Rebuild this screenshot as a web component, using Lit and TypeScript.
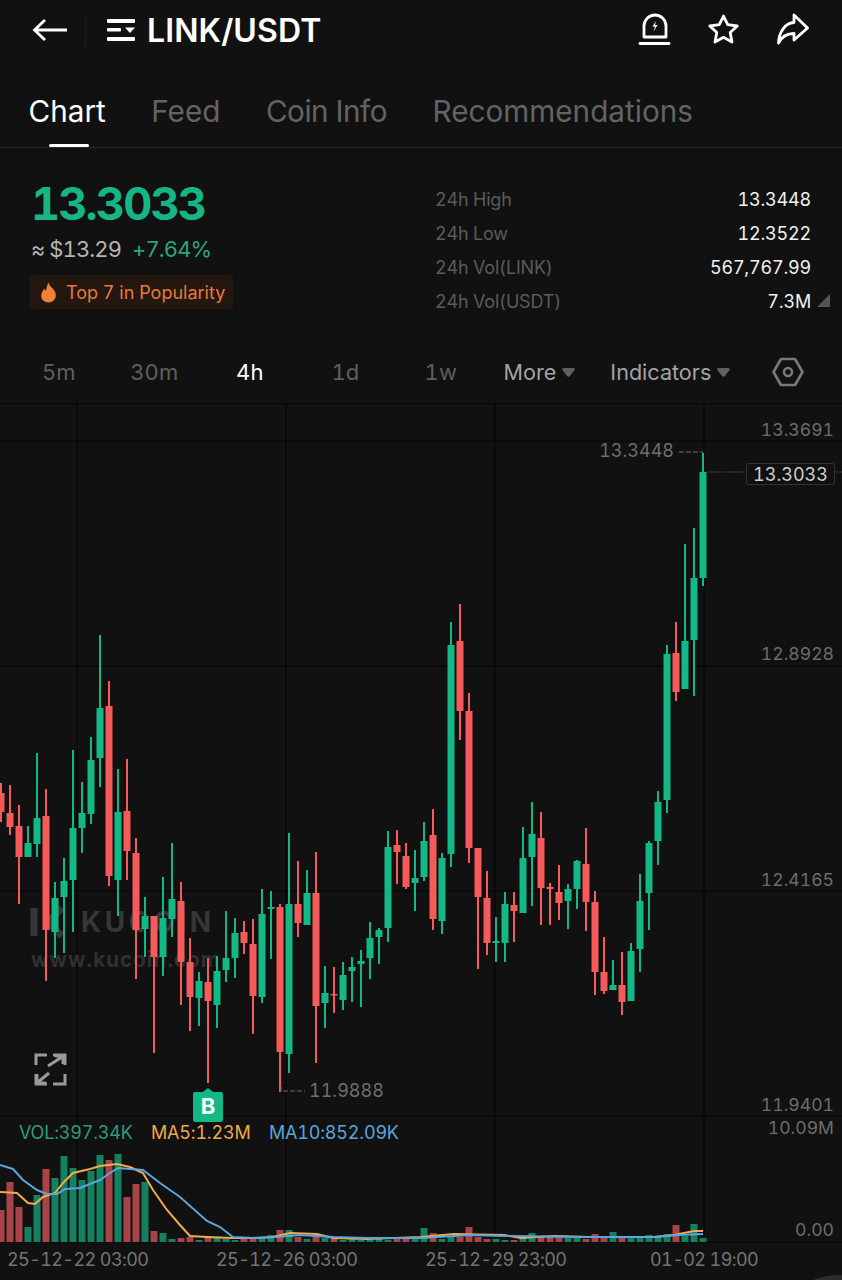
import { LitElement, html, svg, css } from 'lit';
import { customElement } from 'lit/decorators.js';

const UP = '#12b886';
const DOWN = '#f65a5a';
const UP_DIM = '#14805f';
const DOWN_DIM = '#a84447';

// [x, up?, wick top, body top, body bottom, wick bottom]
type Candle = [number, boolean, number, number, number, number];

const CANDLES: Candle[] = [
  [1, false, 783, 793, 812, 822],
  [10, false, 785, 813, 827, 835],
  [19, false, 805, 826, 857, 904],
  [28, true, 826, 843, 857, 857],
  [37, true, 753, 818, 844, 857],
  [46, false, 789, 816, 930, 981],
  [55, true, 882, 898, 932, 958],
  [64, true, 858, 881, 897, 953],
  [73, true, 750, 828, 880, 932],
  [82, true, 782, 813, 828, 853],
  [91, true, 737, 760, 814, 824],
  [100, true, 635, 708, 758, 787],
  [109, false, 681, 706, 876, 886],
  [118, true, 769, 812, 880, 916],
  [127, false, 759, 811, 851, 880],
  [136, false, 838, 853, 930, 979],
  [145, true, 897, 916, 929, 957],
  [154, false, 916, 916, 957, 1053],
  [163, true, 877, 918, 957, 976],
  [172, true, 843, 899, 919, 937],
  [181, false, 882, 901, 962, 1005],
  [190, false, 938, 962, 997, 1031],
  [199, true, 972, 981, 998, 1026],
  [208, false, 958, 982, 1001, 1083],
  [217, true, 956, 971, 1005, 1028],
  [226, true, 911, 958, 970, 982],
  [235, true, 918, 933, 958, 978],
  [244, false, 921, 932, 943, 954],
  [253, false, 919, 944, 996, 1034],
  [262, true, 889, 914, 997, 1003],
  [271, true, 891, 907, 909, 959],
  [280, false, 904, 907, 1052, 1092],
  [289, true, 833, 904, 1054, 1073],
  [298, false, 861, 904, 923, 937],
  [307, true, 870, 893, 925, 925],
  [316, false, 852, 893, 1006, 1063],
  [325, true, 966, 993, 1003, 1028],
  [334, false, 967, 994, 995, 1013],
  [343, true, 962, 975, 1000, 1010],
  [352, true, 957, 967, 971, 1002],
  [361, true, 950, 961, 964, 1007],
  [370, true, 922, 938, 958, 979],
  [379, true, 928, 930, 937, 964],
  [388, true, 831, 847, 928, 942],
  [397, false, 830, 845, 852, 884],
  [406, false, 843, 856, 887, 889],
  [415, true, 850, 878, 883, 911],
  [424, true, 822, 841, 877, 881],
  [433, false, 809, 835, 919, 930],
  [442, true, 853, 858, 921, 934],
  [451, true, 622, 645, 854, 867],
  [460, false, 604, 641, 711, 740],
  [469, false, 693, 711, 848, 863],
  [478, false, 848, 848, 897, 969],
  [487, false, 871, 898, 943, 955],
  [496, true, 917, 941, 943, 962],
  [505, true, 892, 904, 943, 962],
  [514, false, 892, 905, 911, 942],
  [523, true, 827, 858, 913, 913],
  [532, true, 802, 834, 857, 906],
  [541, false, 812, 838, 888, 925],
  [550, false, 883, 887, 889, 925],
  [559, false, 865, 892, 903, 920],
  [568, true, 884, 889, 901, 929],
  [577, true, 860, 861, 889, 909],
  [586, false, 828, 864, 902, 931],
  [595, false, 891, 902, 972, 995],
  [604, false, 937, 972, 991, 994],
  [613, true, 960, 985, 990, 990],
  [622, false, 952, 985, 1002, 1015],
  [631, true, 943, 951, 1001, 1001],
  [640, true, 874, 901, 949, 972],
  [649, true, 841, 843, 893, 930],
  [658, true, 791, 802, 841, 865],
  [667, true, 645, 654, 800, 813],
  [676, false, 622, 653, 692, 701],
  [685, true, 544, 641, 689, 689],
  [694, true, 528, 578, 640, 696],
  [703, true, 453, 472, 578, 586],
];

// volume bar tops, one per candle, in the same order
const VOLUME_TOPS = [
  1210, 1182, 1207, 1227, 1195, 1169, 1178, 1156, 1168, 1180, 1171, 1155, 1160, 1154, 1197, 1184,
  1182, 1231, 1233, 1239, 1238, 1237, 1240, 1237, 1238, 1239, 1240, 1239, 1239, 1238, 1235, 1230,
  1230, 1237, 1239, 1235, 1238, 1239, 1240, 1239, 1240, 1240, 1239, 1240, 1239, 1239, 1238, 1228,
  1233, 1239, 1237, 1237, 1227, 1237, 1239, 1239, 1240, 1240, 1238, 1233, 1237, 1237, 1237, 1238,
  1238, 1239, 1234, 1237, 1232, 1238, 1238, 1237, 1235, 1237, 1234, 1225, 1236, 1224, 1238,
];

const MA5 =
  '0,1192 17,1193 28,1203 35,1204 43,1197 55,1193 63,1183 73,1173 90,1169 100,1166 117,1164 130,1167 143,1173 153,1190 167,1210 180,1225 190,1236 207,1237 233,1238 253,1238 273,1237 290,1233 317,1234 333,1238 367,1239 421,1237 454,1234 504,1235 521,1238 554,1236 588,1237 654,1237 674,1235 694,1231 703,1231';
const MA10 =
  '0,1165 13,1169 23,1180 37,1190 47,1194 57,1194 65,1189 80,1188 100,1180 110,1173 118,1168 143,1170 160,1183 180,1197 207,1221 220,1227 233,1237 253,1238 277,1237 300,1235 333,1237 367,1238 421,1238 471,1235 504,1236 588,1237 654,1237 678,1235 703,1234';

const GRID_X = [77, 286, 495, 704];
const GRID_Y = [441, 666, 891, 1116, 1242];

const AXIS_LABELS: [string, number][] = [
  ['13.3691', 436],
  ['12.8928', 660],
  ['12.4165', 886],
  ['11.9401', 1111],
  ['10.09M', 1134],
  ['0.00', 1236],
];

const DATE_LABELS: [string, number][] = [
  ['25-12-22 03:00', 7],
  ['25-12-26 03:00', 216],
  ['25-12-29 23:00', 425],
  ['01-02 19:00', 650],
];

const STATS: [string, string][] = [
  ['24h High', '13.3448'],
  ['24h Low', '12.3522'],
  ['24h Vol(LINK)', '567,767.99'],
  ['24h Vol(USDT)', '7.3M'],
];

@customElement('app-root')
export class AppRoot extends LitElement {
  static override styles = css`
    :host {
      display: block;
      width: 842px;
      height: 1280px;
      overflow: hidden;
      background: #111111;
      color: #fff;
      font-family: Inter, 'Liberation Sans', sans-serif;
      font-variant-numeric: tabular-nums;
    }

    .header {
      display: flex;
      align-items: center;
      height: 60px;
      padding: 0 32px;
    }
    .back {
      width: 36px;
      height: 24px;
    }
    .divider {
      width: 1px;
      height: 34px;
      margin: 0 20px 0 17px;
      background: #1c1c1c;
    }
    .menu {
      width: 30px;
      height: 26px;
      margin-right: 11px;
    }
    .pair {
      font-size: 32px;
      font-weight: 600;
      letter-spacing: 0.1px;
      flex: 1;
    }
    .actions {
      display: flex;
      gap: 36px;
      margin-right: 1px;
    }
    .actions svg {
      width: 33px;
      height: 34px;
      fill: none;
      stroke: #fff;
      stroke-width: 2.8;
      stroke-linejoin: round;
      stroke-linecap: round;
    }
    .actions .bolt {
      fill: #fff;
      stroke: none;
    }

    .tabs {
      display: flex;
      gap: 45.5px;
      height: 88px;
      padding: 0 28.5px;
      box-sizing: border-box;
      border-bottom: 1px solid #2a2a2a;
    }
    .tab {
      position: relative;
      height: 87px;
      line-height: 102px;
      font-size: 29.7px;
      font-weight: 400;
      color: #636363;
    }
    .tab.tight {
      letter-spacing: -0.5px;
    }
    .tab.active {
      color: #fff;
    }
    .tab.active::after {
      content: '';
      position: absolute;
      left: 20px;
      width: 40px;
      bottom: 0;
      height: 3px;
      border-radius: 2px;
      background: #fff;
    }

    .summary {
      display: flex;
      justify-content: space-between;
      height: 191px;
      padding: 33px 12px 0 30px;
      box-sizing: border-box;
    }
    .price {
      margin-left: 1px;
      font-size: 45px;
      line-height: 46px;
      font-weight: 700;
      letter-spacing: -1.8px;
      color: #17b486;
    }
    .sub {
      display: flex;
      gap: 11px;
      margin: 8px 0 0 1px;
      font-size: 22px;
      line-height: 28px;
      letter-spacing: -0.9px;
      color: #b4b4b4;
    }
    .change {
      color: #2ba57f;
    }
    .pill {
      display: inline-flex;
      align-items: center;
      gap: 9px;
      height: 34px;
      margin-top: 12px;
      padding: 0 8px 0 10px;
      border-radius: 3px;
      background: #24170f;
      color: #e57a40;
      font-size: 18px;
    }
    .pill svg {
      width: 17px;
      height: 21px;
    }

    .stats {
      display: grid;
      grid-template-columns: 1fr auto;
      width: 395px;
      padding-top: 1px;
      grid-auto-rows: 34px;
      align-items: center;
      padding-right: 19px;
      box-sizing: border-box;
    }
    .label {
      font-size: 18px;
      letter-spacing: -0.2px;
      color: #5b5b5b;
    }
    .value {
      position: relative;
      font-size: 18px;
      letter-spacing: -0.2px;
      text-align: right;
      color: #f2f2f2;
    }
    .corner {
      position: absolute;
      left: 100%;
      bottom: 5px;
      margin-left: 6px;
      width: 13px;
      height: 13px;
      fill: #555;
    }

    .periods {
      display: flex;
      align-items: center;
      height: 64px;
      padding-top: 2px;
      box-sizing: border-box;
      font-size: 22px;
      color: #5f5f5f;
    }
    .period {
      width: 95.5px;
      text-align: center;
    }
    .period.first {
      margin-left: 11px;
    }
    .period.active {
      color: #fff;
    }
    .drop {
      display: flex;
      align-items: center;
      gap: 6px;
      font-size: 21.6px;
      color: #a3a3a3;
    }
    .drop svg {
      width: 13px;
      height: 9px;
      fill: #5f5f5f;
    }
    .drop.more {
      margin-left: 15px;
      margin-right: 35px;
    }
    .hex {
      width: 32px;
      height: 32px;
      margin-left: 42px;
      fill: none;
      stroke: #7a7a7a;
      stroke-width: 2.6;
      stroke-linejoin: round;
    }

    .chart {
      display: block;
      width: 842px;
      height: 877px;
    }
    .grid {
      stroke: #070707;
      stroke-width: 1.2;
    }
    .axis {
      fill: #6c6c6c;
      font-size: 17.6px;
    }
    .date {
      fill: #747474;
      font-size: 18px;
      letter-spacing: -0.6px;
    }
    .mark {
      fill: #6e6e6e;
      font-size: 18px;
    }
    .dash {
      stroke: #6e6e6e;
      stroke-width: 1.2;
      fill: none;
      stroke-dasharray: 5 2;
    }
    .dots {
      stroke: #5a5a5a;
      stroke-width: 1;
      stroke-dasharray: 1.5 1.5;
    }
    .last-box {
      fill: #111111;
      stroke: #333333;
    }
    .last-text {
      fill: #cfcfcf;
      font-size: 18px;
    }
    .wm-big {
      fill: #363636;
      font-size: 28px;
      font-weight: 700;
      letter-spacing: 3.6px;
    }
    .wm-url {
      fill: #303030;
      font-size: 20.5px;
      font-weight: 700;
      letter-spacing: 1.1px;
    }
    .wm-logo {
      fill: none;
      stroke: #363636;
      stroke-width: 7;
    }
    .expand {
      fill: none;
      stroke: #9a9a9a;
      stroke-width: 3;
    }
    .legend {
      font-size: 18px;
      letter-spacing: -0.2px;
    }
    .buy {
      fill: #fff;
      font-size: 22px;
      font-weight: 700;
    }
  `;

  private _candle([x, up, wt, bt, bb, wb]: Candle) {
    const color = up ? UP : DOWN;
    return svg`
      <rect x=${x - 1} y=${wt} width="2" height=${wb - wt} fill=${color}></rect>
      <rect x=${x - 3.5} y=${bt} width="7" height=${Math.max(bb - bt, 1.5)} fill=${color}></rect>
    `;
  }

  private _chart() {
    return html`
      <svg class="chart" viewBox="0 403 842 877">
        ${GRID_X.map((x) => svg`<line class="grid" x1=${x} x2=${x} y1="403" y2="1242"></line>`)}
        ${GRID_Y.map((y) => svg`<line class="grid" x1="0" x2="842" y1=${y} y2=${y}></line>`)}
        <line class="grid" x1="0" x2="842" y1="403.5" y2="403.5"></line>

        <g>
          <path class="wm-logo" d="M34 908V936M62 908L48 922L62 936"></path>
          <text class="wm-big" x="81" y="932">KUCOIN</text>
          <text class="wm-url" x="31" y="967">www.kucoin.com</text>
        </g>

        ${CANDLES.map((c) => this._candle(c))}

        ${CANDLES.map((c, i) => {
          const top = VOLUME_TOPS[i];
          return svg`<rect x=${c[0] - 3.5} y=${top} width="7" height=${1242 - top}
            fill=${c[1] ? UP_DIM : DOWN_DIM}></rect>`;
        })}
        <polyline points=${MA5} fill="none" stroke="#f0ac4c" stroke-width="2"></polyline>
        <polyline points=${MA10} fill="none" stroke="#5aa6dc" stroke-width="2"></polyline>

        ${AXIS_LABELS.map(
          ([t, y]) => svg`<text class="axis" x="834" y=${y} text-anchor="end">${t}</text>`,
        )}
        ${DATE_LABELS.map(([t, x]) => svg`<text class="date" x=${x} y="1266">${t}</text>`)}

        <text class="mark" x="674" y="457" text-anchor="end">13.3448</text>
        <line class="dash" x1="679" x2="703" y1="452" y2="452"></line>
        <path class="dash" d="M281 1086V1091H305"></path>
        <text class="mark" x="309" y="1097">11.9888</text>

        <line class="dots" x1="707" x2="746" y1="472" y2="472"></line>
        <line class="dots" x1="834" x2="842" y1="472" y2="472"></line>
        <rect class="last-box" x="746.5" y="463.5" width="88" height="21" rx="2"></rect>
        <text class="last-text" x="790.5" y="481" text-anchor="middle">13.3033</text>

        <path class="expand" d="M36 1065V1055H47M53 1055H65V1065M65 1074V1084H53M47 1084H36V1074"></path>
        <path class="expand" d="M48 1066L62 1057M55 1056H63V1064"></path>
        <path class="expand" d="M37 1083L49 1073M37 1074V1083H46"></path>

        <path
          d="M193 1094Q193 1092 195 1092H203L208 1088L213 1092H221Q223 1092 223 1094V1119Q223 1122 221 1122H195Q193 1122 193 1119Z"
          fill="#12b886"
        ></path>
        <text class="buy" x="208" y="1114" text-anchor="middle">B</text>

        <text class="legend" x="19" y="1139" fill="#2a9d78">VOL:397.34K</text>
        <text class="legend" x="151" y="1139" fill="#eea94c">MA5:1.23M</text>
        <text class="legend" x="269" y="1139" fill="#5aa6dc">MA10:852.09K</text>

        <ellipse cx="842" cy="1284" rx="32" ry="9" fill="#2b2b2b"></ellipse>
      </svg>
    `;
  }

  protected override render() {
    return html`
      <div class="header">
        <svg class="back" viewBox="0 0 36 24" fill="none" stroke="#fff" stroke-width="2.8">
          <path d="M35 12H3M13 2L2.5 12L13 22"></path>
        </svg>
        <div class="divider"></div>
        <svg class="menu" viewBox="0 0 30 26" fill="#fff">
          <rect x="1" y="2" width="28" height="4" rx="1"></rect>
          <rect x="1" y="11" width="14" height="3.6" rx="1"></rect>
          <path d="M19 10.5H29L24 16Z"></path>
          <rect x="1" y="20" width="28" height="4" rx="1"></rect>
        </svg>
        <div class="pair">LINK/USDT</div>
        <div class="actions">
          <svg viewBox="0 0 33 34">
            <path d="M6 24V13A11 11 0 0 1 28 13V24Z"></path>
            <path d="M2 30.5H31"></path>
            <path class="bolt" d="M18 8L14.5 13.5H17L15.5 18.5L19.5 12H17Z"></path>
          </svg>
          <svg viewBox="0 0 33 34">
            <path
              d="M16.5 3L20.7 11.7L30.2 13L23.2 19.5L25 29L16.5 24.3L8 29L9.8 19.5L2.8 13L12.3 11.7Z"
            ></path>
          </svg>
          <svg viewBox="0 0 33 34">
            <path d="M18 2L31.5 15L18 27V20.5C11 20.5 5.5 24 2.5 30C3 19 9 10 18 9.5Z"></path>
          </svg>
        </div>
      </div>

      <div class="tabs">
        <div class="tab active">Chart</div>
        <div class="tab">Feed</div>
        <div class="tab tight">Coin Info</div>
        <div class="tab">Recommendations</div>
      </div>

      <div class="summary">
        <div>
          <div class="price">13.3033</div>
          <div class="sub"><span>≈ $13.29</span><span class="change">+7.64%</span></div>
          <div class="pill">
            <svg viewBox="0 0 17 21">
              <path
                d="M8.5 0.5C9 4 14 6.5 15.5 11C17 16.5 13 20.5 8.5 20.5C4 20.5 0 17 1.5 11.5C2.2 9 3.5 8 4.5 6.5C5 8 5.5 8.5 6 9C6.5 6 7 3 8.5 0.5Z"
                fill="#f0803a"
              ></path>
            </svg>
            Top 7 in Popularity
          </div>
        </div>
        <div class="stats">
          ${STATS.map(
            ([label, value], i) => html`
              <div class="label">${label}</div>
              <div class="value">
                ${value}
                ${i === 3
                  ? html`<svg class="corner" viewBox="0 0 13 13"><path d="M13 0V13H0Z"></path></svg>`
                  : ''}
              </div>
            `,
          )}
        </div>
      </div>

      <div class="periods">
        <div class="period first">5m</div>
        <div class="period">30m</div>
        <div class="period active">4h</div>
        <div class="period">1d</div>
        <div class="period">1w</div>
        <div class="drop more">
          More
          <svg viewBox="0 0 13 9"><path d="M0 1.5Q0 0 2 0H11Q13 0 13 1.5L7.5 8.5Q6.5 9 5.5 8.5Z"></path></svg>
        </div>
        <div class="drop">
          Indicators
          <svg viewBox="0 0 13 9"><path d="M0 1.5Q0 0 2 0H11Q13 0 13 1.5L7.5 8.5Q6.5 9 5.5 8.5Z"></path></svg>
        </div>
        <svg class="hex" viewBox="0 0 32 32">
          <path d="M9 3H23L30.5 16L23 29H9L1.5 16Z"></path>
          <circle cx="16" cy="16" r="4"></circle>
        </svg>
      </div>

      ${this._chart()}
    `;
  }
}

declare global {
  interface HTMLElementTagNameMap {
    'app-root': AppRoot;
  }
}
